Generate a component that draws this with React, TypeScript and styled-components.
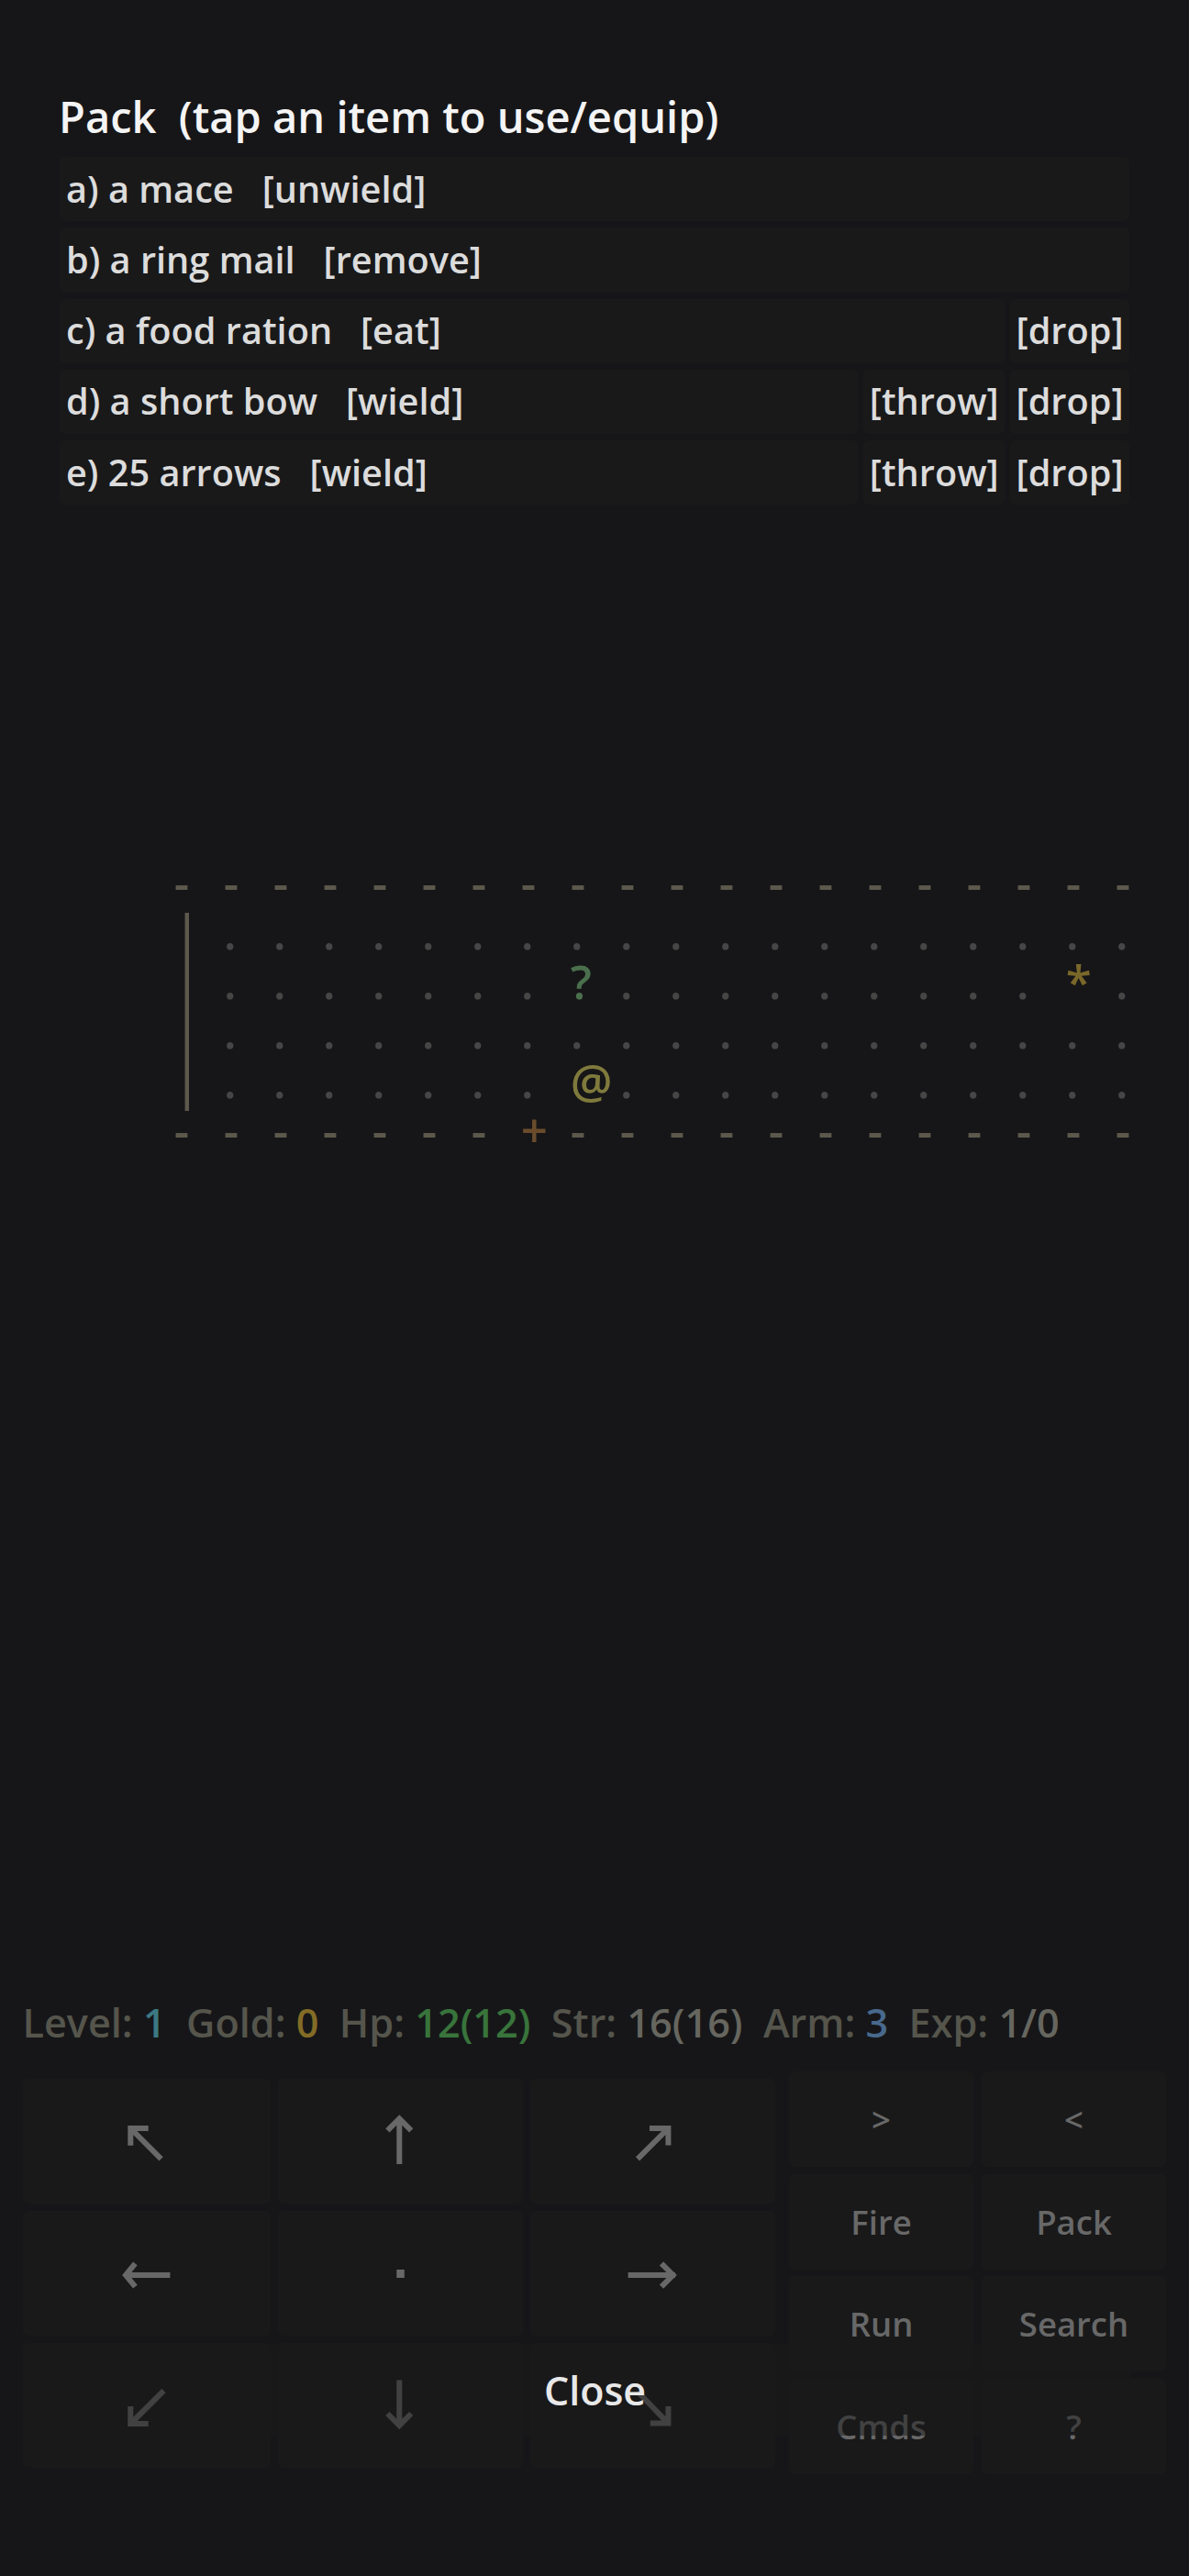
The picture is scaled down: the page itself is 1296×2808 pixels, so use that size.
import React from "react"
import styled, { createGlobalStyle } from "styled-components"

const GlobalStyle = createGlobalStyle`
  html, body {
    margin: 0;
    padding: 0;
    background: #161618;
  }
  body {
    font-family: "Open Sans", "Noto Sans", sans-serif;
    font-weight: 600;
  }
`

const Screen = styled.div`
  position: relative;
  width: 1296px;
  height: 2808px;
  overflow: hidden;
  display: flex;
  flex-direction: column;
  background: #161618;
`

const PackPanel = styled.section`
  padding: 97px 65px 0 65px;
`

const PackTitle = styled.h1`
  margin: 0 0 13px -1px;
  font-size: 47px;
  line-height: 61px;
  font-weight: 600;
  color: #f4f4f4;
  white-space: pre;
`

const PackList = styled.div`
  display: flex;
  flex-direction: column;
  gap: 7.33px;
`

const PackRow = styled.div`
  display: flex;
  gap: 6px;
  height: 70px;
`

const ItemButton = styled.div`
  flex: 1;
  display: flex;
  align-items: center;
  padding: 0 7px 1px 7px;
  border-radius: 6px;
  background: #19191a;
  font-size: 39.7px;
  color: #dcdcdc;
  white-space: pre;
`

const ActionButton = styled(ItemButton)`
  flex: none;
  padding: 0 6.5px 1px 6.5px;
`

const MapBoard = styled.div`
  display: grid;
  grid-template-columns: repeat(21, 54px);
  grid-auto-rows: 54px;
  width: 1080.5px;
  margin: 391px 0 0 189.7px;
  overflow: hidden;
`

const MapCell = styled.span<{ $tone: string }>`
  display: block;
  height: 54px;
  overflow: hidden;
  font-size: 51px;
  font-weight: 600;
  line-height: 40px;
  white-space: pre;
  color: ${(p) => p.$tone};
`

const WallGlyph = styled.span`
  display: inline-block;
  transform: scaleY(1.6);
`

const StatusLine = styled.div`
  margin: auto 0 25px 24.5px;
  font-size: 43.2px;
  line-height: 57px;
  color: #55554c;
  white-space: pre;
`

const StatValue = styled.span<{ $tone: string }>`
  color: ${(p) => p.$tone};
`

const Controls = styled.div`
  display: flex;
  align-items: center;
  gap: 15px;
  padding: 0 25px 111px 25px;
`

const DirectionPad = styled.div`
  display: grid;
  grid-template-columns: 270px 267px 267px;
  grid-auto-rows: 136px;
  gap: 8px;
`

const PadKey = styled.div`
  display: flex;
  align-items: center;
  justify-content: center;
  border-radius: 6px;
  background: #19191a;
`

const PadArrow = styled.svg`
  width: 64px;
  height: 64px;
  stroke: #686868;
  stroke-width: 6;
  fill: none;
`

const CommandGrid = styled.div`
  display: grid;
  grid-template-columns: 201px 201px;
  grid-auto-rows: 104px;
  gap: 7.6px 9px;
`

const CommandKey = styled.div`
  display: flex;
  align-items: center;
  justify-content: center;
  border-radius: 6px;
  background: #19191a;
  font-size: 36.5px;
  color: #686868;
`

const CloseButton = styled.div`
  position: absolute;
  left: 65px;
  top: 2555px;
  width: 1167px;
  height: 100px;
  display: flex;
  align-items: center;
  justify-content: center;
  border-radius: 6px;
  background: rgba(26, 26, 26, 0.5);
  font-size: 43px;
  color: #e8e8e8;
`

interface PackItem {
  label: string
  throwable?: boolean
  droppable?: boolean
}

const packItems: PackItem[] = [
  { label: "a) a mace   [unwield]" },
  { label: "b) a ring mail   [remove]" },
  { label: "c) a food ration   [eat]", droppable: true },
  { label: "d) a short bow   [wield]", throwable: true, droppable: true },
  { label: "e) 25 arrows   [wield]", throwable: true, droppable: true },
]

const mapRows = [
  "---------------------",
  "|...................",
  "|.......?.........*.",
  "|...................",
  "|.......@...........",
  "-------+-------------",
]

const toneFor = (glyph: string) => {
  switch (glyph) {
    case "-":
    case "|":
      return "#5c584c"
    case "?":
      return "#4a6f4c"
    case "@":
      return "#7f7a3c"
    case "+":
      return "#6a4c2c"
    case "*":
      return "#7a682a"
    default:
      return "#464646"
  }
}

// arrows are drawn around the centre of their key
const arrowPaths = [
  "M1.7 -14H-17.7V4.7M-17.7 -14L15.6 19.3",
  "M-1.7 25V-24M-14.6 -11.6L-1.7 -24.5L11.2 -11.6",
  "M-4 -14H16.4V4.5M16.4 -14L-17 19.4",
  "M25.4 2H-24M-12.6 -10.6L-23 2L-12.6 14.6",
  "",
  "M-27.4 2H24M9 -10.6L21.6 2L9 14.6",
  "M1.7 20H-17.7V1M-17.7 20L18.5 -16",
  "M-1.7 -27.4V22M-14.6 9L-1.7 21.9L11.2 9",
  "M-3.2 19.6H16.4V1M16.4 19.6L-17 -15",
]

const commands = [">", "<", "Fire", "Pack", "Run", "Search", "Cmds", "?"]

export default function App() {
  return (
    <Screen>
      <GlobalStyle />
      <PackPanel>
        <PackTitle>Pack  (tap an item to use/equip)</PackTitle>
        <PackList>
          {packItems.map((item) => (
            <PackRow key={item.label}>
              <ItemButton>{item.label}</ItemButton>
              {item.throwable && <ActionButton>[throw]</ActionButton>}
              {item.droppable && <ActionButton>[drop]</ActionButton>}
            </PackRow>
          ))}
        </PackList>
      </PackPanel>

      <MapBoard>
        {mapRows.map((row, r) =>
          row
            .padEnd(21, " ")
            .split("")
            .map((glyph, c) => (
              <MapCell key={`${r}-${c}`} $tone={toneFor(glyph)}>
                {glyph === "|" ? <WallGlyph>{glyph}</WallGlyph> : glyph}
              </MapCell>
            )),
        )}
      </MapBoard>

      <StatusLine>
        Level: <StatValue $tone="#3c7882">1</StatValue>  Gold:{" "}
        <StatValue $tone="#836c26">0</StatValue>  Hp:{" "}
        <StatValue $tone="#38743b">12(12)</StatValue>  Str:{" "}
        <StatValue $tone="#66665f">16(16)</StatValue>  Arm:{" "}
        <StatValue $tone="#48698c">3</StatValue>  Exp:{" "}
        <StatValue $tone="#66665f">1/0</StatValue>
      </StatusLine>

      <Controls>
        <DirectionPad>
          {arrowPaths.map((d, i) => (
            <PadKey key={i}>
              <PadArrow viewBox="-32 -32 64 64">
                {d ? (
                  <path d={d} />
                ) : (
                  <rect x="-4.7" y="-4" width="8.5" height="9" fill="#686868" stroke="none" />
                )}
              </PadArrow>
            </PadKey>
          ))}
        </DirectionPad>
        <CommandGrid>
          {commands.map((label) => (
            <CommandKey key={label}>{label}</CommandKey>
          ))}
        </CommandGrid>
      </Controls>

      <CloseButton>Close</CloseButton>
    </Screen>
  )
}
